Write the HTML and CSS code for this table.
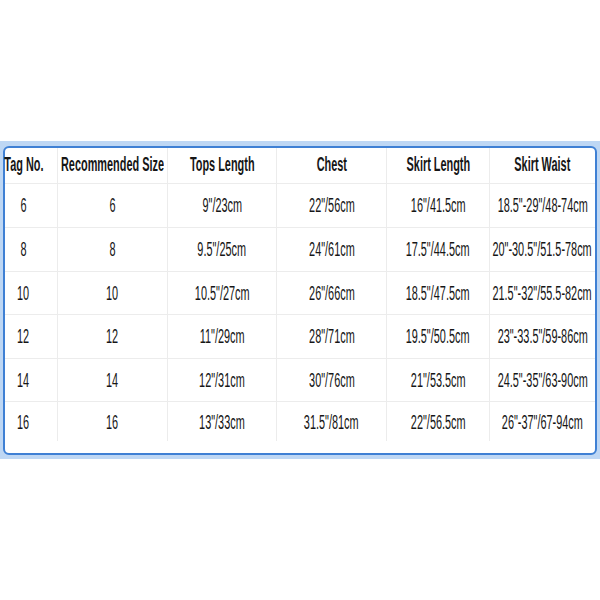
FILE: index.html
```html
<!DOCTYPE html>
<html>
<head>
<meta charset="utf-8">
<link rel="stylesheet" href="styles.css">
</head>
<body>
<div class="page">
  <div class="frame">
    <div class="card">
      <div class="grid">
        <div class="c h first"><span>Tag No.</span></div>
        <div class="c h"><span>Recommended Size</span></div>
        <div class="c h"><span>Tops Length</span></div>
        <div class="c h"><span>Chest</span></div>
        <div class="c h"><span>Skirt Length</span></div>
        <div class="c h last"><span>Skirt Waist</span></div>

        <div class="c r1 first"><span>6</span></div>
        <div class="c r1"><span>6</span></div>
        <div class="c r1"><span>9"/23cm</span></div>
        <div class="c r1"><span>22"/56cm</span></div>
        <div class="c r1"><span>16"/41.5cm</span></div>
        <div class="c r1 last"><span>18.5"-29"/48-74cm</span></div>

        <div class="c r2 first"><span>8</span></div>
        <div class="c r2"><span>8</span></div>
        <div class="c r2"><span>9.5"/25cm</span></div>
        <div class="c r2"><span>24"/61cm</span></div>
        <div class="c r2"><span>17.5"/44.5cm</span></div>
        <div class="c r2 last"><span>20"-30.5"/51.5-78cm</span></div>

        <div class="c r3 first"><span>10</span></div>
        <div class="c r3"><span>10</span></div>
        <div class="c r3"><span>10.5"/27cm</span></div>
        <div class="c r3"><span>26"/66cm</span></div>
        <div class="c r3"><span>18.5"/47.5cm</span></div>
        <div class="c r3 last"><span>21.5"-32"/55.5-82cm</span></div>

        <div class="c r4 first"><span>12</span></div>
        <div class="c r4"><span>12</span></div>
        <div class="c r4"><span>11"/29cm</span></div>
        <div class="c r4"><span>28"/71cm</span></div>
        <div class="c r4"><span>19.5"/50.5cm</span></div>
        <div class="c r4 last"><span>23"-33.5"/59-86cm</span></div>

        <div class="c r5 first"><span>14</span></div>
        <div class="c r5"><span>14</span></div>
        <div class="c r5"><span>12"/31cm</span></div>
        <div class="c r5"><span>30"/76cm</span></div>
        <div class="c r5"><span>21"/53.5cm</span></div>
        <div class="c r5 last"><span>24.5"-35"/63-90cm</span></div>

        <div class="c end first"><span>16</span></div>
        <div class="c end"><span>16</span></div>
        <div class="c end"><span>13"/33cm</span></div>
        <div class="c end"><span>31.5"/81cm</span></div>
        <div class="c end"><span>22"/56.5cm</span></div>
        <div class="c end last"><span>26"-37"/67-94cm</span></div>
      </div>
    </div>
  </div>
</div>
</body>
</html>
```
FILE: styles.css
```css
html, body {
  margin: 0;
  padding: 0;
  background: #ffffff;
}
.page {
  width: 600px;
  height: 600px;
  padding-top: 141px;
  box-sizing: border-box;
}
.frame {
  background: #bed7f4;
  padding: 5px 3px 4px 3px;
}
.card {
  background: #ffffff;
  border: 2px solid #3f80d4;
  border-radius: 6px;
  padding-bottom: 12px;
}
.grid {
  display: grid;
  grid-template-columns: 53px 110px 109px 110px 103px 105px;
  grid-template-rows: 36px 44px 44px 43px 44px 43px 39px;
  font-family: "Liberation Sans", Arial, sans-serif;
  font-size: 20px;
  color: #161616;
}
.c {
  display: flex;
  align-items: center;
  justify-content: center;
  border-right: 1px solid #ececec;
  border-bottom: 1px solid #ececec;
  white-space: nowrap;
  min-width: 0;
}
.c span {
  display: inline-block;
  transform: scaleX(0.545);
  flex: none;
}
.c.h {
  font-weight: bold;
  padding-bottom: 3px;
}
.c.first {
  padding-right: 15px;
}
.c.last {
  border-right: none;
}
.c.end {
  border-bottom: none;
  align-items: flex-start;
  padding-top: 9px;
}
```
